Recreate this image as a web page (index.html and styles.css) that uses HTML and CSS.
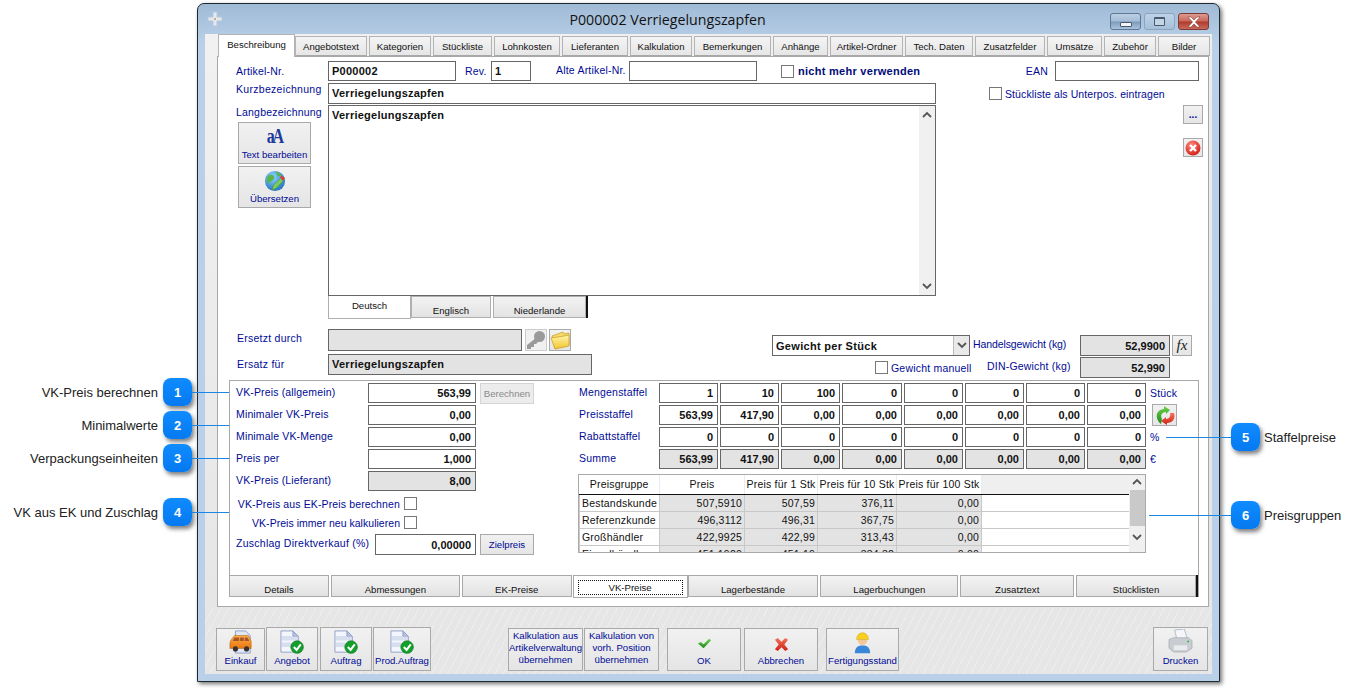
FILE: index.html
```html
<!DOCTYPE html>
<html lang="de">
<head>
<meta charset="utf-8">
<title>P000002 Verriegelungszapfen</title>
<link rel="stylesheet" href="styles.css">
</head>
<body>
<svg class="defs" width="0" height="0" aria-hidden="true">
  <defs>
    <linearGradient id="gGreen" x1="0" y1="0" x2="0" y2="1"><stop offset="0" stop-color="#6fd24a"/><stop offset="1" stop-color="#1b8a1e"/></linearGradient>
    <linearGradient id="gRed" x1="0" y1="0" x2="0" y2="1"><stop offset="0" stop-color="#f4735a"/><stop offset="1" stop-color="#cf1f14"/></linearGradient>
    <linearGradient id="gOrange" x1="0" y1="0" x2="0" y2="1"><stop offset="0" stop-color="#fdb04a"/><stop offset="1" stop-color="#e87510"/></linearGradient>
    <linearGradient id="gFolder" x1="0" y1="0" x2="0" y2="1"><stop offset="0" stop-color="#fff6ab"/><stop offset="1" stop-color="#f2c52c"/></linearGradient>
    <radialGradient id="gGlobe" cx=".4" cy=".3" r=".8"><stop offset="0" stop-color="#8fd4ff"/><stop offset="1" stop-color="#1668bd"/></radialGradient>
    <radialGradient id="gCancel" cx=".4" cy=".3" r=".8"><stop offset="0" stop-color="#ff8a7a"/><stop offset="1" stop-color="#cf1410"/></radialGradient>
    <symbol id="doc" viewBox="0 0 26 26">
      <path d="M1 1h13l6 6v17H1z" fill="#f3f6fc" stroke="#8e9cc6"/>
      <path d="M14 1v6h6z" fill="#b4c1e3" stroke="#8e9cc6"/>
      <path d="M1 9h19M1 16h11" stroke="#c5cfe6" stroke-width="5" opacity=".6"/>
      <circle cx="18.500" cy="18.500" r="6.800" fill="#12a02a" stroke="#0b6e1c" stroke-width=".7"/>
      <path d="M15 18.500l3 3 4.500-6" fill="none" stroke="#fff" stroke-width="2.200"/>
    </symbol>
  </defs>
</svg>

<div class="window">
  <header class="titlebar">
    <svg class="appicon" viewBox="0 0 16 16"><path d="M6 1h4v5h5v4h-5v5H6v-5H1V6h5z" fill="#e8eef5" stroke="#b9c8d9"/><circle cx="8" cy="8" r="1" fill="#e88a3a"/></svg>
    <h1 class="title">P000002 Verriegelungszapfen</h1>
    <div class="winbtns">
      <span class="winbtn"><i class="glyph-min"></i></span>
      <span class="winbtn winbtn-max"><i class="glyph-max"></i></span>
      <span class="winbtn winbtn-close">
        <svg viewBox="0 0 16 12" width="16" height="12"><path d="M2 1h3l3 3 3-3h3l-4.500 5 4.500 5h-3l-3-3-3 3H2l4.500-5z" fill="#fff" stroke="#7a2a20" stroke-width=".5"/></svg>
      </span>
    </div>
  </header>

  <div class="winbody">
    <nav class="maintabs">
      <span class="tab tab-on">Beschreibung</span>
      <span class="tab">Angebotstext</span>
      <span class="tab">Kategorien</span>
      <span class="tab">Stückliste</span>
      <span class="tab">Lohnkosten</span>
      <span class="tab">Lieferanten</span>
      <span class="tab">Kalkulation</span>
      <span class="tab">Bemerkungen</span>
      <span class="tab">Anhänge</span>
      <span class="tab">Artikel-Ordner</span>
      <span class="tab">Tech. Daten</span>
      <span class="tab">Zusatzfelder</span>
      <span class="tab">Umsätze</span>
      <span class="tab">Zubehör</span>
      <span class="tab">Bilder</span>
    </nav>

    <section class="panel">
      <div class="row1">
        <label class="lbl lbl-main">Artikel-Nr.</label>
        <div class="field field-text w128">P000002</div>
        <label class="lbl lbl-rev">Rev.</label>
        <div class="field field-text w40">1</div>
        <label class="lbl lbl-alt">Alte Artikel-Nr.</label>
        <div class="field w128"></div>
        <span class="check check-nmv"></span>
        <label class="lbl lbl-strong">nicht mehr verwenden</label>
        <label class="lbl lbl-ean">EAN</label>
        <div class="field w144"></div>
      </div>

      <div class="row2">
        <label class="lbl lbl-main lbl-kurz">Kurzbezeichnung</label>
        <div class="field field-text w608">Verriegelungszapfen</div>
        <span class="check check-stl"></span>
        <label class="lbl lbl-stl">Stückliste als Unterpos. eintragen</label>
      </div>

      <div class="row3">
        <div class="leftcol">
          <label class="lbl lbl-lang">Langbezeichnung</label>
          <button class="btn btn-side">
            <span class="aa-icon">aA</span>
            <span>Text bearbeiten</span>
          </button>
          <button class="btn btn-side">
            <svg class="ico-globe" viewBox="0 0 24 24">
              <circle cx="12" cy="12" r="11" fill="url(#gGlobe)"/>
              <path d="M4 7c3-3 6-2 7 0s-1 4-3 5-3 4-4 2-1-5 0-7zM13 2c3 0 5 2 6 4l-4 1zM14 13c2-1 4 0 4 2l-3 4-2-2z" fill="#58b548"/>
              <path d="M9 22l1-5 8-8 3 3-8 8z" fill="#7ccb5c" stroke="#3b7d2e" stroke-width=".5"/>
              <path d="M19 6l4 3-2 2.500-3.500-3.500z" fill="#e63a2a"/>
            </svg>
            <span>Übersetzen</span>
          </button>
        </div>
        <div class="memo">
          <div class="memo-text">Verriegelungszapfen</div>
          <div class="vscroll">
            <svg class="chev" viewBox="0 0 10 7"><path d="M1 6l4-4 4 4" fill="none" stroke="#555" stroke-width="1.800"/></svg>
            <svg class="chev" viewBox="0 0 10 7"><path d="M1 1l4 4 4-4" fill="none" stroke="#555" stroke-width="1.800"/></svg>
          </div>
        </div>
        <div class="rightcol">
          <button class="btn btn-dots">...</button>
          <button class="btn btn-cancel">
            <svg viewBox="0 0 16 16" width="16" height="16"><circle cx="8" cy="8" r="7.500" fill="url(#gCancel)"/><path d="M5 5l6 6M11 5l-6 6" stroke="#fff" stroke-width="2.400"/></svg>
          </button>
        </div>
      </div>

      <div class="langtabs">
        <span class="ltab ltab-on">Deutsch</span>
        <span class="ltab ltab-en">Englisch</span>
        <span class="ltab ltab-nl">Niederlande</span>
        <span class="blackbar"></span>
      </div>

      <div class="mid">
        <div class="mid-left">
          <div class="mid-row">
            <label class="lbl lbl-main lbl-ers1">Ersetzt durch</label>
            <div class="field field-ro w194"></div>
            <button class="btn btn-ico btn-key">
              <svg viewBox="0 0 20 20" width="20" height="20"><circle cx="13.500" cy="6.500" r="5.500" fill="#9a9a9a"/><path d="M10 8L1 15v4h4v-2h3v-3h2l3-3z" fill="#9a9a9a"/></svg>
            </button>
            <button class="btn btn-ico">
              <svg viewBox="0 0 20 20" width="20" height="20"><path d="M2 6l11-4 1 2 5-1 0 12-14 3z" fill="#f7dc6a" stroke="#c79a1e" stroke-width=".7"/><path d="M1 8l13-2 5-1 0 11-14 3z" fill="url(#gFolder)" stroke="#c79a1e" stroke-width=".7"/></svg>
            </button>
          </div>
          <div class="mid-row mid-row2">
            <label class="lbl lbl-main lbl-ers2">Ersatz für</label>
            <div class="field field-ro field-text w264">Verriegelungszapfen</div>
          </div>
        </div>
        <div class="mid-right">
          <div class="weight-row">
            <div class="combo"><span>Gewicht per Stück</span><span class="combo-arrow"><svg viewBox="0 0 10 7" width="10" height="7"><path d="M1 1l4 4 4-4" fill="none" stroke="#555" stroke-width="1.800"/></svg></span></div>
            <label class="lbl lbl-hg">Handelsgewicht (kg)</label>
            <div class="field field-ro field-num w90">52,9900</div>
            <button class="btn btn-fx">fx</button>
          </div>
          <div class="weight-row weight-row2">
            <span class="check check-gm"></span>
            <label class="lbl lbl-gm">Gewicht manuell</label>
            <label class="lbl lbl-din">DIN-Gewicht (kg)</label>
            <div class="field field-ro field-num w90">52,990</div>
          </div>
        </div>
      </div>

      <section class="inner">
        <div class="inner-main">
          <div class="vk">
            <div class="vk-row"><label class="lbl lbl-vk">VK-Preis (allgemein)</label><div class="field field-num w108">563,99</div><button class="btn btn-dis">Berechnen</button></div>
            <div class="vk-row"><label class="lbl lbl-vk">Minimaler VK-Preis</label><div class="field field-num w108">0,00</div></div>
            <div class="vk-row"><label class="lbl lbl-vk">Minimale VK-Menge</label><div class="field field-num w108">0,00</div></div>
            <div class="vk-row"><label class="lbl lbl-vk">Preis per</label><div class="field field-num w108">1,000</div></div>
            <div class="vk-row"><label class="lbl lbl-vk">VK-Preis (Lieferant)</label><div class="field field-ro field-num w108">8,00</div></div>
            <div class="chk-row chk-row-a"><label class="lbl">VK-Preis aus EK-Preis berechnen</label><span class="check"></span></div>
            <div class="chk-row chk-row-b"><label class="lbl">VK-Preis immer neu kalkulieren</label><span class="check"></span></div>
            <div class="vk-row vk-row-z"><label class="lbl lbl-z">Zuschlag Direktverkauf (%)</label><div class="field field-num w101">0,00000</div><button class="btn btn-ziel">Zielpreis</button></div>
          </div>

          <div class="staffel">
            <div class="sgrid">
              <label class="lbl">Mengenstaffel</label>
              <div class="field field-num">1</div><div class="field field-num">10</div><div class="field field-num">100</div><div class="field field-num">0</div><div class="field field-num">0</div><div class="field field-num">0</div><div class="field field-num">0</div><div class="field field-num">0</div>
              <label class="lbl lbl-unit">Stück</label>

              <label class="lbl">Preisstaffel</label>
              <div class="field field-num">563,99</div><div class="field field-num">417,90</div><div class="field field-num">0,00</div><div class="field field-num">0,00</div><div class="field field-num">0,00</div><div class="field field-num">0,00</div><div class="field field-num">0,00</div><div class="field field-num">0,00</div>
              <button class="btn btn-refresh">
                <svg viewBox="0 0 20 20" width="22" height="20"><path d="M9 1l6 4-4 4V7C7 7 5 10 7 14l-1 5C0 14 0 5 9 4z" fill="url(#gGreen)"/><path d="M19 8c2 6-2 10-7 10v2l-6-4 5-4v2c3 0 5-3 4-6z" fill="url(#gRed)"/></svg>
              </button>

              <label class="lbl">Rabattstaffel</label>
              <div class="field field-num">0</div><div class="field field-num">0</div><div class="field field-num">0</div><div class="field field-num">0</div><div class="field field-num">0</div><div class="field field-num">0</div><div class="field field-num">0</div><div class="field field-num">0</div>
              <label class="lbl lbl-unit">%</label>

              <label class="lbl">Summe</label>
              <div class="field field-ro field-num">563,99</div><div class="field field-ro field-num">417,90</div><div class="field field-ro field-num">0,00</div><div class="field field-ro field-num">0,00</div><div class="field field-ro field-num">0,00</div><div class="field field-ro field-num">0,00</div><div class="field field-ro field-num">0,00</div><div class="field field-ro field-num">0,00</div>
              <label class="lbl lbl-unit">€</label>
            </div>

            <div class="pgroup">
              <table class="ptable">
                <thead>
                  <tr><th>Preisgruppe</th><th>Preis</th><th>Preis für 1 Stk</th><th>Preis für 10 Stk</th><th>Preis für 100 Stk</th><th class="th-rest"></th></tr>
                </thead>
                <tbody>
                  <tr><td>Bestandskunde</td><td>507,5910</td><td>507,59</td><td>376,11</td><td>0,00</td><td></td></tr>
                  <tr><td>Referenzkunde</td><td>496,3112</td><td>496,31</td><td>367,75</td><td>0,00</td><td></td></tr>
                  <tr><td>Großhändler</td><td>422,9925</td><td>422,99</td><td>313,43</td><td>0,00</td><td></td></tr>
                  <tr><td>Einzelhändler</td><td>451,1920</td><td>451,19</td><td>334,32</td><td>0,00</td><td></td></tr>
                </tbody>
              </table>
              <div class="vscroll vscroll-t">
                <svg class="chev" viewBox="0 0 10 7"><path d="M1 6l4-4 4 4" fill="none" stroke="#555" stroke-width="1.800"/></svg>
                <span class="thumb"></span>
                <svg class="chev" viewBox="0 0 10 7"><path d="M1 1l4 4 4-4" fill="none" stroke="#555" stroke-width="1.800"/></svg>
              </div>
            </div>
          </div>
        </div>

        <nav class="subtabs">
          <span class="stab">Details</span>
          <span class="stab">Abmessungen</span>
          <span class="stab">EK-Preise</span>
          <span class="stab stab-on"><span class="focus">VK-Preise</span></span>
          <span class="stab">Lagerbestände</span>
          <span class="stab">Lagerbuchungen</span>
          <span class="stab">Zusatztext</span>
          <span class="stab">Stücklisten</span>
          <span class="blackbar blackbar-sub"></span>
        </nav>
      </section>
    </section>

    <footer class="footer">
      <button class="btn fbtn f-ein">
        <svg viewBox="0 0 26 26" width="24" height="24"><path d="M7 1h11l5 5v19H7z" fill="#dfe6f7" stroke="#8e9cc6"/><path d="M2 11l4-5h15l3 6v8H1v-6z" fill="url(#gOrange)" stroke="#b8610c" stroke-width=".6"/><path d="M6 8h5v4H4zM12 8h4v4h-4zM17 8h3l2 4h-5z" fill="#a5572a"/><circle cx="7" cy="20.500" r="2.800" fill="#333"/><circle cx="19" cy="20.500" r="2.800" fill="#333"/></svg>
        <span>Einkauf</span>
      </button>
      <button class="btn fbtn f-ang"><svg width="24" height="24"><use href="#doc"/></svg><span>Angebot</span></button>
      <button class="btn fbtn f-auf"><svg width="24" height="24"><use href="#doc"/></svg><span>Auftrag</span></button>
      <button class="btn fbtn f-pro"><svg width="24" height="24"><use href="#doc"/></svg><span>Prod.Auftrag</span></button>
      <button class="btn fbtn fbtn-text f-k1">Kalkulation aus Artikelverwaltung übernehmen</button>
      <button class="btn fbtn fbtn-text f-k2">Kalkulation von vorh. Position übernehmen</button>
      <button class="btn fbtn f-ok">
        <svg viewBox="0 0 16 14" width="15" height="11" preserveAspectRatio="none"><path d="M1 7l3-2 3 3 6-7 2 2-8 10z" fill="url(#gGreen)"/></svg>
        <span>OK</span>
      </button>
      <button class="btn fbtn f-ab">
        <svg viewBox="0 0 16 16" width="15" height="15"><path d="M1 3l3-2 4 4 4-4 3 2-4 5 4 5-3 2-4-4-4 4-3-2 4-5z" fill="url(#gRed)"/></svg>
        <span>Abbrechen</span>
      </button>
      <button class="btn fbtn f-fe">
        <svg viewBox="0 0 20 26" width="17" height="22"><path d="M1 25c0-7 4-9 9-9s9 2 9 9z" fill="#3a86d8"/><circle cx="10" cy="10" r="5.500" fill="#f4c79b"/><path d="M3 9c0-5 3-8 7-8s7 3 7 8z" fill="#f7cf1f" stroke="#c79a1e" stroke-width=".5"/></svg>
        <span>Fertigungsstand</span>
      </button>
      <button class="btn fbtn f-dr">
        <svg viewBox="0 0 26 26" width="25" height="25"><path d="M7 1l10-1 3 10H9z" fill="#f4f6fa" stroke="#9aa4b3" stroke-width=".7"/><path d="M1 11l5-2h15l4 3v8l-6 4H6l-5-4z" fill="#c9ccd0" stroke="#8f959c" stroke-width=".5"/><path d="M6 17h14v5H6z" fill="#e9ebed"/><circle cx="21" cy="13" r="1" fill="#28b24a"/></svg>
        <span>Drucken</span>
      </button>
    </footer>
  </div>
</div>

<div class="callout callout-l c1"><span class="co-label">VK-Preis berechnen</span><span class="badge">1</span><span class="co-line w37"></span></div>
<div class="callout callout-l c2"><span class="co-label">Minimalwerte</span><span class="badge">2</span><span class="co-line w37"></span></div>
<div class="callout callout-l c3"><span class="co-label">Verpackungseinheiten</span><span class="badge">3</span><span class="co-line w37"></span></div>
<div class="callout callout-l c4"><span class="co-label">VK aus EK und Zuschlag</span><span class="badge">4</span><span class="co-line w37"></span></div>
<div class="callout c5"><span class="co-line w65"></span><span class="badge">5</span><span class="co-label">Staffelpreise</span></div>
<div class="callout c6"><span class="co-line w82"></span><span class="badge">6</span><span class="co-label">Preisgruppen</span></div>
</body>
</html>
```

FILE: styles.css
```css
* { box-sizing: border-box; }
html, body { margin: 0; padding: 0; }
body {
  position: relative;
  width: 1356px;
  height: 690px;
  overflow: hidden;
  background: #fff;
  font-family: "Liberation Sans", Arial, sans-serif;
  font-size: 11px;
  color: #000;
}
.defs { position: absolute; }

/* window */
.window {
  display: flex;
  flex-direction: column;
  width: 1023px;
  height: 679px;
  margin: 3px 0 0 197px;
  border: 1px solid #1c2a30;
  border-radius: 7px 7px 0 0;
  background: linear-gradient(180deg, #a0bad6 0, #b9d0e8 40px, #b9d0e8 100%);
  box-shadow: 2px 2px 4px rgba(0, 0, 0, .55);
}
.titlebar {
  position: relative;
  display: flex;
  align-items: center;
  justify-content: center;
  flex: 0 0 30px;
  padding-right: 82px;
}
.appicon { position: absolute; left: 9px; top: 7px; width: 16px; height: 16px; opacity: .9; }
.title { margin: 0; font: 400 14.2px "Open Sans", "Liberation Sans", sans-serif; color: #111; }
.winbtns { position: absolute; right: 10px; top: 9px; display: flex; gap: 3px; }
.winbtn {
  display: flex;
  align-items: center;
  justify-content: center;
  width: 31px;
  height: 17px;
  border: 1px solid #5f7791;
  border-radius: 3px;
  background: linear-gradient(180deg, #bcd0e6 0, #a4bcd6 48%, #7d9abb 52%, #a9c3dd 100%);
}
.winbtn-max { border-color: #8ea4bb; background: linear-gradient(180deg, #bdd2e8, #a6c0da); }
.winbtn-close { border-color: #7d3a33; background: linear-gradient(180deg, #dc9b92 0, #c9675b 48%, #b03a2c 52%, #c76a5c 100%); }
.glyph-min { display: block; width: 12px; height: 5px; margin-top: 5px; border: 1px solid #4a5a6c; border-radius: 1px; background: #f2f5f8; }
.glyph-max { display: block; width: 11px; height: 9px; border: 1px solid #4a5a6c; border-top-width: 2px; background: #c4d5e6; border-radius: 1px; }

.winbody {
  display: flex;
  flex-direction: column;
  flex: 1;
  margin: 0 7px 7px;
  background:
    linear-gradient(170deg, rgba(255, 255, 255, .45) 0, rgba(255, 255, 255, 0) 70%),
    #e6e6e6;
}

/* tabs */
.maintabs {
  display: grid;
  grid-template-columns: 75px 72px 62px 59px 66px 66px 62px 77px 55px 73px 68px 70px 55px 52px 52px;
  column-gap: 2px;
  position: relative;
  z-index: 2;
  height: 22px;
  margin-left: 13px;
  align-items: end;
}
.tab {
  display: flex;
  align-items: center;
  justify-content: center;
  height: 20px;
  border: 1px solid #b4b4b4;
  border-bottom-color: #a8a8a8;
  background: linear-gradient(180deg, #f4f4f4, #e6e6e6);
  color: #111;
  font-size: 9.6px;
}
.tab-on {
  height: 23px;
  margin-right: -2px;
  margin-bottom: -1px;
  padding-bottom: 4px;
  border-bottom: 0;
  background: #fff;
}

.panel {
  display: flex;
  flex-direction: column;
  width: 992px;
  height: 551px;
  margin-left: 12px;
  padding-top: 4px;
  border: 1px solid #a8a8a8;
  background: #fff;
}

.lbl { color: #000a96; font-size: 10.5px; letter-spacing: .2px; white-space: nowrap; }
.lbl-strong { font-size: 11px; font-weight: 700; margin-left: 4px; color: #000a78; letter-spacing: .28px; }
.lbl-main { flex: 0 0 92px; }
.lbl-kurz { margin-bottom: 9px; letter-spacing: .3px; }
.lbl-stl { letter-spacing: .1px; margin-left: -1px; }
.lbl-rev { margin-left: 9px; flex: 0 0 26px; }
.lbl-alt { margin-left: 25px; flex: 0 0 73px; margin-bottom: 3px; }
.lbl-ean { margin-left: auto; margin-right: 7px; }
.lbl-ers1 { margin-bottom: 4px; padding-left: 1px; letter-spacing: .25px; }
.lbl-ers2 { margin-bottom: 2px; padding-left: 1px; letter-spacing: .25px; }

.field {
  display: flex;
  align-items: center;
  height: 20px;
  border: 1px solid #666;
  background: #fff;
  font-size: 11px;
  font-weight: 700;
  color: #111;
  white-space: nowrap;
}
.field-text { padding-left: 3px; letter-spacing: .25px; }
.field-num { justify-content: flex-end; padding-right: 4px; }
.field-ro { background: #e3e3e3; }
.w40 { width: 40px; }
.w90 { width: 90px; height: 21px; }
.w101 { width: 101px; height: 21px; }
.w108 { width: 108px; }
.w128 { width: 128px; }
.w144 { width: 144px; }
.w194 { width: 194px; height: 22px; }
.w264 { width: 264px; height: 21px; padding-bottom: 1px; }
.w608 { width: 608px; height: 21px; padding-bottom: 2px; }

.check {
  display: inline-block;
  flex: 0 0 13px;
  width: 13px;
  height: 13px;
  border: 1px solid #777;
  background: #fff;
}
.check-nmv { margin-left: 24px; }
.check-stl { margin-left: 53px; margin-right: 4px; }

.row1, .row2 { display: flex; align-items: center; padding: 0 9px 0 18px; }
.row1 { height: 20px; }
.row2 { height: 21px; margin-top: 2px; }
.row3 { display: flex; height: 191px; margin-top: 1px; padding-left: 18px; }

.leftcol { flex: 0 0 92px; display: flex; flex-direction: column; align-items: flex-start; }
.lbl-lang { height: 17px; line-height: 14px; }

.btn {
  display: flex;
  align-items: center;
  justify-content: center;
  padding: 0;
  border: 1px solid #a9a9a9;
  background: linear-gradient(180deg, #f1f1f1, #e5e5e5);
  color: #000a96;
  font: 9.6px "Liberation Sans", Arial, sans-serif;
  cursor: default;
}
.btn-side {
  flex-direction: column;
  justify-content: flex-end;
  width: 73px;
  height: 42px;
  margin: 0 0 2px 2px;
  padding-bottom: 3px;
}
.aa-icon {
  display: block;
  height: 20px;
  margin-bottom: 3px;
  font: 700 20px/20px "Liberation Serif", serif;
  letter-spacing: -3px;
  color: #1c3a9a;
  transform: scaleX(.8);
}
.ico-globe { width: 22px; height: 22px; margin-bottom: 1px; }

.memo {
  display: flex;
  justify-content: space-between;
  width: 608px;
  height: 191px;
  border: 1px solid #666;
}
.memo-text { padding: 3px 0 0 3px; font-size: 11px; font-weight: 700; letter-spacing: .25px; color: #111; }
.vscroll {
  display: flex;
  flex-direction: column;
  justify-content: space-between;
  align-items: center;
  flex: 0 0 16px;
  padding: 5px 0;
  background: #f0f0f0;
}
.chev { width: 10px; height: 7px; }

.rightcol { display: flex; flex-direction: column; margin-left: 247px; }
.btn-dots { width: 20px; height: 19px; margin-bottom: 14px; font-weight: 700; font-size: 10px; }
.btn-cancel { width: 20px; height: 19px; }

.langtabs { position: relative; display: flex; height: 23px; margin-left: 110px; }
.ltab {
  display: flex;
  align-items: center;
  justify-content: center;
  height: 22px;
  padding-top: 6px;
  border: 1px solid #b0b0b0;
  background: linear-gradient(180deg, #f2f2f2, #e3e3e3);
  font-size: 9.6px;
  color: #111;
}
.ltab-on { width: 83px; height: 23px; padding-top: 0; padding-bottom: 4px; border-top: 0; background: #fff; }
.ltab-en { width: 80px; }
.ltab-nl { width: 93px; margin-left: 2px; }
.blackbar { display: block; width: 2px; height: 22px; background: #111; }

.mid { display: flex; height: 49px; margin-top: 10px; padding-left: 18px; }
.mid-left { flex: 0 0 536px; }
.mid-row { display: flex; align-items: center; }
.mid-row2 { margin-top: 3px; }
.btn-ico { width: 22px; height: 22px; margin-left: 3px; }
.btn-key { background: #f0f0f0; border-color: #ccc; }
.btn-ico + .btn-ico { margin-left: 2px; }

.mid-right { padding-top: 6px; }
.weight-row { display: flex; align-items: center; height: 21px; }
.weight-row2 { margin-top: 1px; }
.combo {
  display: flex;
  align-items: center;
  justify-content: space-between;
  width: 198px;
  height: 21px;
  padding-left: 3px;
  border: 1px solid #666;
  font-size: 11px;
  font-weight: 700;
  letter-spacing: .3px;
  color: #111;
}
.combo-arrow { display: flex; align-items: center; justify-content: center; width: 16px; height: 19px; border-left: 1px solid #bbb; background: #e9e9e9; }
.lbl-hg { margin-left: 3px; width: 107px; letter-spacing: -.1px; margin-bottom: 3px; }
.btn-fx { width: 20px; height: 21px; margin-left: 2px; font: italic 400 15px "Liberation Serif", serif; color: #222; }
.check-gm { margin-left: 103px; }
.lbl-gm { margin-left: 3px; width: 96px; }
.lbl-din { width: 93px; margin-bottom: 3px; }

/* inner panel */
.inner {
  display: flex;
  flex-direction: column;
  justify-content: space-between;
  width: 970px;
  height: 217px;
  margin: 2px 0 0 11px;
  border: 1px solid #a8a8a8;
  border-bottom: 0;
}
.inner-main { display: flex; padding-top: 2px; }
.vk { flex: 0 0 349px; padding-left: 6px; }
.vk-row { display: flex; align-items: center; height: 20px; margin-bottom: 2px; }
.lbl-vk { flex: 0 0 132px; margin-bottom: 3px; letter-spacing: .15px; }
.btn-dis { width: 54px; height: 21px; margin-left: 4px; color: #8a8a8a; background: #ececec; border-color: #d4d4d4; }
.chk-row { display: flex; align-items: center; justify-content: flex-end; width: 181px; height: 13px; }
.chk-row .lbl { margin-right: 4px; letter-spacing: .13px; }
.chk-row-a { margin-top: 6px; }
.chk-row-b { margin-top: 6px; }
.chk-row-b .lbl { letter-spacing: .03px; }
.vk-row-z { height: 21px; margin-top: 5px; }
.lbl-z { flex: 0 0 139px; margin-bottom: 3px; letter-spacing: .26px; }
.btn-ziel { width: 54px; height: 21px; margin-left: 4px; }

.staffel { flex: 1; }
.sgrid {
  display: grid;
  grid-template-columns: 78px 59px 59px 59px 60px 59px 59px 59px 59px 30px;
  grid-auto-rows: 20px;
  gap: 2px;
  align-items: center;
}
.sgrid .lbl { margin-bottom: 3px; }
.sgrid .lbl-unit { margin: 0 0 0 2px; }
.btn-refresh { width: 25px; height: 22px; margin-left: 4px; }

.pgroup {
  display: flex;
  align-items: flex-start;
  width: 568px;
  height: 79px;
  margin: 5px 0 0 -1px;
  border: 1px solid #aaa;
  overflow: hidden;
}
.ptable {
  flex: 0 0 550px;
  width: 550px;
  table-layout: fixed;
  border-collapse: collapse;
  font-size: 10.5px;
  letter-spacing: .2px;
  color: #111;
}
.ptable th { height: 19px; padding: 0; font-weight: 400; background: #fff; border-right: 1px solid #e4ecf6; border-bottom: 1px solid #111; white-space: nowrap; overflow: hidden; }
.ptable .th-rest { background: #efefef; border-right: 0; }
.ptable td { height: 17px; padding: 0 2px; text-align: right; background: #e3e3e3; border: 1px solid #c8c8c8; white-space: nowrap; border-top: 0; }
.ptable td:first-child { text-align: left; background: #fff; }
.ptable td:last-child { background: #fff; border-right: 0; }
.ptable tr > :nth-child(1) { width: 80px; }
.ptable tr > :nth-child(2) { width: 85px; }
.ptable tr > :nth-child(3) { width: 73px; }
.ptable tr > :nth-child(4) { width: 79px; }
.ptable tr > :nth-child(5) { width: 85px; }
.vscroll-t { flex: 0 0 16px; align-self: stretch; padding: 3px 0 6px; justify-content: flex-start; }
.thumb { display: block; width: 15px; height: 36px; margin: 5px 0 8px; background: #c9c9c9; }

.subtabs { position: relative; display: flex; align-items: flex-start; height: 22px; }
.stab {
  display: flex;
  align-items: center;
  justify-content: center;
  height: 22px;
  padding-top: 6px;
  margin-right: 2px;
  border: 1px solid #a8a8a8;
  background: linear-gradient(180deg, #f3f3f3, #e2e2e2);
  font-size: 9.6px;
  color: #111;
}
.stab:nth-child(1) { width: 100px; margin-left: -1px; }
.stab:nth-child(2) { width: 129px; }
.stab:nth-child(3) { width: 110px; margin-right: 1px; }
.stab:nth-child(4) { width: 115px; margin-right: 0; }
.stab:nth-child(5) { width: 131px; }
.stab:nth-child(6) { width: 138px; }
.stab:nth-child(7) { width: 114px; }
.stab:nth-child(8) { width: 120px; margin-right: 0; }
.stab-on { height: 23px; padding: 3px 4px 2px; background: #fff; }
.focus { display: flex; align-items: center; justify-content: center; width: 100%; height: 15px; border: 1px dotted #111; }
.blackbar-sub { height: 22px; }

/* footer */
.footer {
  display: flex;
  align-items: flex-end;
  flex: 1;
  padding: 0 4px 3px 11px;
  background:
    repeating-linear-gradient(118deg, rgba(255, 255, 255, .28) 0 1px, rgba(255, 255, 255, 0) 1px 7px);
}
.fbtn { flex-direction: column; justify-content: flex-end; height: 44px; padding-bottom: 3px; line-height: 12px; }
.fbtn span { white-space: nowrap; }
.fbtn svg { margin-bottom: 1px; }
.fbtn-text { justify-content: center; }
.f-ein { width: 49px; height: 43px; margin-right: 1px; }
.f-ang { width: 52px; margin-right: 2px; }
.f-auf { width: 52px; margin-right: 1px; }
.f-pro { width: 58px; margin-right: 77px; }
.f-k1 { width: 75px; height: 43px; margin-right: 1px; padding-left: 1px; padding-right: 1px; }
.f-k2 { width: 75px; height: 43px; margin-right: 8px; padding-left: 2px; padding-right: 2px; }
.f-ok { width: 74px; height: 43px; margin-right: 3px; }
.f-ok svg { margin-bottom: 6px; }
.f-ab { width: 74px; height: 43px; margin-right: 8px; }
.f-ab svg { margin-bottom: 3px; }
.f-fe { width: 73px; height: 43px; margin-right: 254px; }
.f-dr { width: 55px; }

/* help callouts */
.callout { position: absolute; display: flex; align-items: center; height: 28px; }
.callout-l { left: 0; width: 229px; justify-content: flex-end; }
.c1 { top: 378px; }
.c2 { top: 411px; }
.c3 { top: 444px; }
.c4 { top: 498px; }
.c5 { top: 423px; left: 1166px; }
.c6 { top: 501px; left: 1149px; }
.co-label { font-size: 13px; color: #222; white-space: nowrap; margin: 0 5px 0 4px; }
.badge {
  display: flex;
  align-items: center;
  justify-content: center;
  flex: 0 0 29px;
  width: 29px;
  height: 28px;
  border-radius: 8px;
  background: linear-gradient(180deg, #0f8cff, #0579f0);
  box-shadow: 2px 3px 4px rgba(0, 0, 0, .5);
  color: #fff;
  font-size: 13px;
  font-weight: 700;
}
.co-line { display: block; height: 1px; background: #1c86e4; }
.w37 { width: 37px; }
.w65 { width: 65px; }
.w82 { width: 82px; }
```
